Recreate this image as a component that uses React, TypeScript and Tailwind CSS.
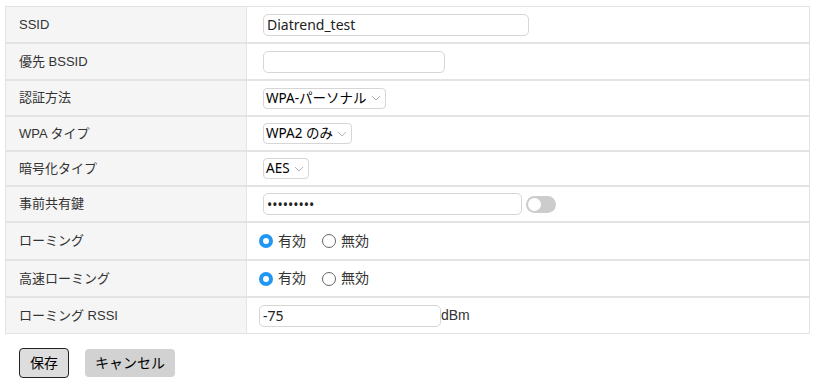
import React, { useState } from "react";

const labelFont = {
  fontFamily: '"Liberation Sans", "Noto Sans CJK JP", sans-serif',
};

const Chevron = () => (
  <svg width="10" height="6" viewBox="0 0 10 6" className="ml-[4px] mr-[4px]">
    <path d="M1 1l4 4 4-4" fill="none" stroke="#b5b5b5" strokeWidth="1" />
  </svg>
);

const Select = ({ value }: { value: string }) => (
  <div className="inline-flex items-center h-[21px] border border-[#d6d6d6] rounded-[4px] pl-[2px] bg-white text-[13.5px] text-black [font-family:'Noto_Sans','Noto_Sans_CJK_JP',sans-serif]">
    {value}
    <Chevron />
  </div>
);

const TextInput = ({ value, width, type = "text" }: { value: string; width: string; type?: string }) => (
  <input
    type={type}
    defaultValue={value}
    readOnly
    className={`${width} h-[22px] border border-[#d6d6d6] rounded-[5px] px-[3px] text-[14px] text-[#222] outline-none [font-family:'Noto_Sans',sans-serif]`}
  />
);

const Radio = ({ checked, label }: { checked: boolean; label: string }) => (
  <label className="inline-flex items-center gap-[5px] text-[14px] text-[#333]" style={labelFont}>
    {checked ? (
      <span className="w-[14px] h-[14px] rounded-full bg-[#2196f3] flex items-center justify-center">
        <span className="w-[6px] h-[6px] rounded-full bg-white" />
      </span>
    ) : (
      <span className="w-[14px] h-[14px] rounded-full border border-[#666] bg-white" />
    )}
    {label}
  </label>
);

const Row = ({ label, h, children }: { label: string; h: string; children: React.ReactNode }) => (
  <div className={`flex ${h} border-t-2 border-[#e3e3e3] first:border-t-0`}>
    <div
      className="w-[241px] shrink-0 bg-[#f5f5f5] border-r border-[#e3e3e3] flex items-center pl-[13px] text-[13px] text-[#333]"
      style={labelFont}
    >
      {label}
    </div>
    <div className="flex-1 flex items-center pl-[16px]">{children}</div>
  </div>
);

export default function App() {
  const [showKey] = useState(false);
  return (
    <div className="w-[823px] h-[385px] bg-white pt-[6px] pl-[5px]">
      <div className="w-[805px] border border-[#e3e3e3]">
        <Row label="SSID" h="h-[35px]">
          <TextInput value="Diatrend_test" width="w-[266px]" />
        </Row>
        <Row label="優先 BSSID" h="h-[37px]">
          <TextInput value="" width="w-[182px]" />
        </Row>
        <Row label="認証方法" h="h-[36px]">
          <Select value="WPA-パーソナル" />
        </Row>
        <Row label="WPA タイプ" h="h-[35px]">
          <Select value="WPA2 のみ" />
        </Row>
        <Row label="暗号化タイプ" h="h-[35px]">
          <Select value="AES" />
        </Row>
        <Row label="事前共有鍵" h="h-[36px]">
          <TextInput value="•••••••••" width="w-[259px]" type={showKey ? "text" : "password"} />
          <div className="ml-[4px] w-[30px] h-[17px] rounded-full bg-[#cccccc] flex items-center pl-[2px]">
            <span className="w-[13px] h-[13px] rounded-full bg-white" />
          </div>
        </Row>
        <Row label="ローミング" h="h-[38px]">
          <div className="flex items-center gap-[16px] -ml-[4px]">
            <Radio checked label="有効" />
            <Radio checked={false} label="無効" />
          </div>
        </Row>
        <Row label="高速ローミング" h="h-[37px]">
          <div className="flex items-center gap-[16px] -ml-[4px]">
            <Radio checked label="有効" />
            <Radio checked={false} label="無効" />
          </div>
        </Row>
        <Row label="ローミング RSSI" h="h-[37px]">
          <div className="flex items-center -ml-[4px]">
            <TextInput value="-75" width="w-[182px]" />
            <span className="text-[14px] text-[#333]" style={labelFont}>
              dBm
            </span>
          </div>
        </Row>
      </div>
      <div className="flex items-center gap-[16px] mt-[14px] ml-[14px]" style={labelFont}>
        <button className="h-[30px] px-[10px] border border-[#222] rounded-[4px] bg-[#dddddd] text-[14px] text-black">
          保存
        </button>
        <button className="h-[28px] px-[10px] rounded-[4px] bg-[#d2d2d2] text-[14px] text-black">
          キャンセル
        </button>
      </div>
    </div>
  );
}
